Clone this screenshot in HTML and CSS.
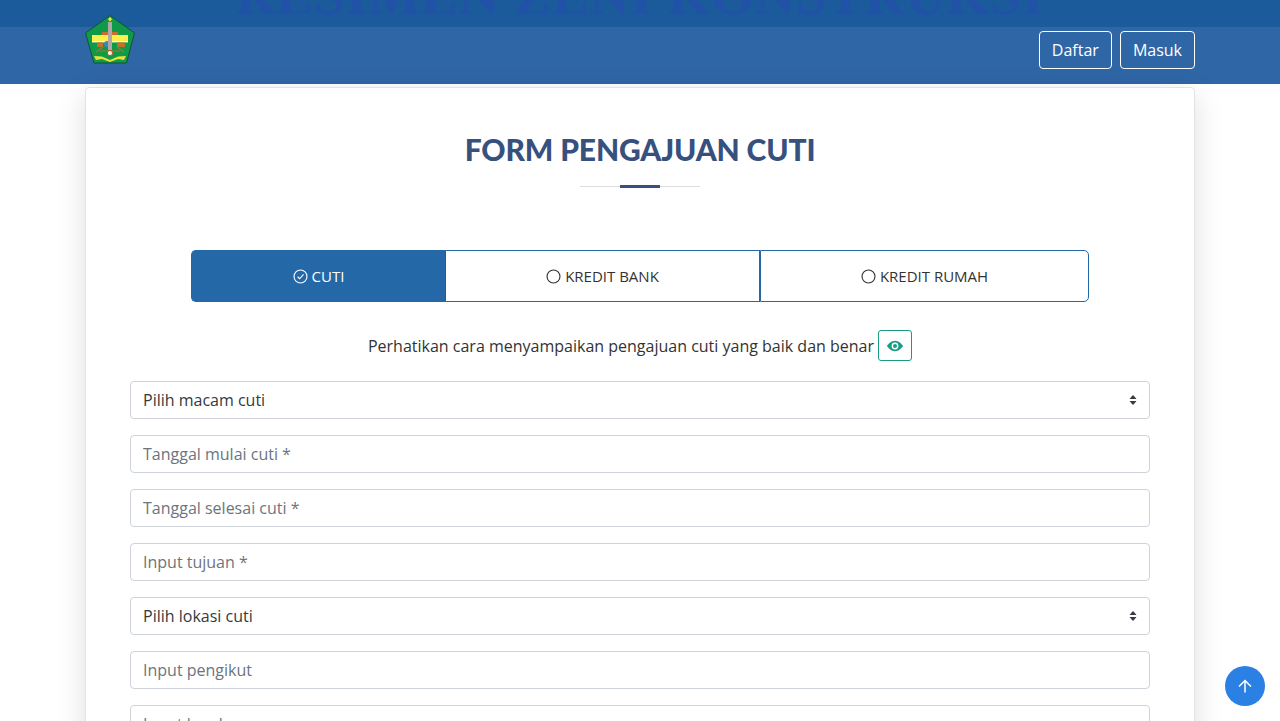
FILE: index.html
```html
<!DOCTYPE html>
<html lang="en">

<head>
    <meta charset="UTF-8">
    <meta name="viewport" content="width=device-width, initial-scale=1.0">
    <title>Form Pengajuan Cuti</title>
    <link rel="stylesheet" href="styles.css">
</head>

<body>
    <!-- Header -->
    <header class="site-header">
        <div class="top-strip">
            <div class="top-title">RESIMEN ZENI KONSTRUKSI</div>
        </div>
        <div class="nav-bar">
            <svg class="logo" viewBox="0 0 50 50" aria-label="Logo">
                <polygon points="25,0.6 49.5,18 41.5,48 9,48 0.5,18" fill="#0f9a48" stroke="#14513a" stroke-width="1" />
                <rect x="17" y="17" width="16" height="3" fill="#c8702a" />
                <rect x="7" y="20" width="36" height="6" fill="#fdf04a" />
                <rect x="7" y="26" width="36" height="1.4" fill="#ffffff" />
                <rect x="12" y="27.4" width="6" height="4.5" fill="#c8702a" />
                <rect x="32" y="27.4" width="8" height="4.5" fill="#c8702a" />
                <path d="M11 37 L18 32 M39 37 L32 32 M15 36 H35" stroke="#a8772a" stroke-width="1.2" fill="none" />
                <circle cx="22" cy="29" r="3" fill="#3f86b8" />
                <rect x="23" y="7" width="4" height="28" fill="#b3a6a8" />
                <circle cx="25" cy="38" r="2.6" fill="#fff3d6" stroke="#c8502a" />
                <polygon points="25,2 27,4.2 25,6.4 23,4.2" fill="#f5e84a" />
                <path d="M9 41 L17 41.5 L25 45 L33 41.5 L41 41 L39 45 L33 44 L25 47 L17 44 L11 45 Z" fill="#e6e23c" />
            </svg>
            <div class="nav-actions">
                <button class="nav-btn">Daftar</button>
                <button class="nav-btn">Masuk</button>
            </div>
        </div>
    </header>

    <!-- Form Card -->
    <main class="form-card">
        <h1 class="form-title">FORM PENGAJUAN CUTI</h1>
        <div class="title-rule"><span></span></div>

        <div class="tabs">
            <button class="tab tab-active">
                <svg class="tab-icon" viewBox="0 0 16 16">
                    <circle cx="8" cy="8" r="6.9" fill="none" stroke="currentColor" stroke-width="1.2" />
                    <path d="M4.9 8.3 L7.1 10.4 L11.2 5.8" fill="none" stroke="currentColor" stroke-width="1.2" />
                </svg>
                CUTI
            </button>
            <button class="tab tab-mid">
                <svg class="tab-icon" viewBox="0 0 16 16">
                    <circle cx="8" cy="8" r="6.9" fill="none" stroke="currentColor" stroke-width="1.2" />
                </svg>
                KREDIT BANK
            </button>
            <button class="tab tab-last">
                <svg class="tab-icon" viewBox="0 0 16 16">
                    <circle cx="8" cy="8" r="6.9" fill="none" stroke="currentColor" stroke-width="1.2" />
                </svg>
                KREDIT RUMAH
            </button>
        </div>

        <p class="hint">
            Perhatikan cara menyampaikan pengajuan cuti yang baik dan benar
            <button class="eye-btn" aria-label="Lihat">
                <svg viewBox="0 0 16 16" width="16" height="16">
                    <path fill="currentColor" d="M8 2.8C4.4 2.8 1.5 5.6 0 8c1.5 2.4 4.4 5.2 8 5.2s6.5-2.8 8-5.2c-1.5-2.4-4.4-5.2-8-5.2zm0 8.6A3.4 3.4 0 1 1 8 4.6a3.4 3.4 0 0 1 0 6.8z" />
                    <circle cx="8" cy="8" r="2" fill="currentColor" />
                </svg>
            </button>
        </p>

        <form class="fields">
            <select class="field field-select">
                <option>Pilih macam cuti</option>
            </select>
            <input class="field" type="text" placeholder="Tanggal mulai cuti *">
            <input class="field" type="text" placeholder="Tanggal selesai cuti *">
            <input class="field" type="text" placeholder="Input tujuan *">
            <select class="field field-select">
                <option>Pilih lokasi cuti</option>
            </select>
            <input class="field" type="text" placeholder="Input pengikut">
            <input class="field" type="text" placeholder="Input keadaan">
        </form>
    </main>

    <!-- Back to top -->
    <button class="to-top" aria-label="Back to top">
        <svg viewBox="0 0 16 16" width="16" height="16">
            <path d="M8 14.5V2.5 M2 8.5 L8 2.5 L14 8.5" fill="none" stroke="#fff" stroke-width="1.5" />
        </svg>
    </button>
</body>

</html>
```

FILE: styles.css
```css
/* General Reset */
* {
    margin: 0;
    padding: 0;
    box-sizing: border-box;
}

html,
body {
    height: 721px;
    overflow: hidden;
}

body {
    background: #fff;
    color: #333;
    font-family: 'Open Sans', sans-serif;
    font-size: 16px;
}

button,
input,
select {
    font-family: inherit;
}

/* Header */
.site-header {
    height: 84px;
    background: #2f66a6;
}

.top-strip {
    height: 27px;
    background: #1b5a9b;
    overflow: hidden;
}

.top-title {
    margin-top: -31px;
    height: 53px;
    line-height: 53px;
    text-align: center;
    font-family: 'Liberation Serif', serif;
    font-size: 55px;
    font-weight: bold;
    letter-spacing: 1px;
    white-space: nowrap;
    color: #2152a8;
}

.nav-bar {
    height: 57px;
    padding: 4px 85px 0;
    display: flex;
    justify-content: space-between;
    align-items: flex-start;
}

.logo {
    width: 50px;
    height: 50px;
    margin-top: -16px;
    display: block;
}

.nav-actions {
    display: flex;
    gap: 8px;
}

.nav-btn {
    height: 38px;
    padding: 0 12px;
    background: transparent;
    border: 1px solid #fff;
    border-radius: 4px;
    color: #fff;
    font-size: 16px;
    font-weight: 500;
}

/* Card */
.form-card {
    width: 1110px;
    margin: 3px auto 0;
    padding: 43px 44px 40px;
    background: #fff;
    border: 1px solid #e3e3e3;
    border-radius: 4px;
    box-shadow: 0 8px 30px rgba(0, 0, 0, 0.13);
}

.form-title {
    font-family: 'Lato', sans-serif;
    font-size: 30px;
    line-height: 36px;
    font-weight: 900;
    letter-spacing: -0.15px;
    text-align: center;
    color: #37517e;
}

.title-rule {
    position: relative;
    width: 120px;
    height: 1px;
    margin: 19px auto 0;
    background: #ddd;
}

.title-rule span {
    position: absolute;
    left: 40px;
    top: -1px;
    width: 40px;
    height: 3px;
    background: #37517e;
}

/* Tabs */
.tabs {
    display: flex;
    width: 898px;
    height: 52px;
    margin: 63px auto 0;
}

.tab {
    display: flex;
    align-items: center;
    justify-content: center;
    gap: 4px;
    height: 52px;
    background: #fff;
    border: 1px solid #2568a7;
    color: #333;
    font-size: 15px;
}

.tab-active {
    width: 255px;
    background: #2568a7;
    border-right-color: #1f5c99;
    color: #fff;
    border-radius: 5px 0 0 5px;
}

.tab-mid {
    width: 314px;
    border-left: 0;
}

.tab-last {
    width: 329px;
    border-radius: 0 5px 5px 0;
}

.tab-icon {
    width: 15px;
    height: 15px;
}

.hint {
    display: flex;
    align-items: center;
    justify-content: center;
    gap: 4px;
    height: 31px;
    margin-top: 28px;
    font-size: 16px;
}

.eye-btn {
    display: flex;
    align-items: center;
    justify-content: center;
    width: 34px;
    height: 31px;
    background: #fff;
    border: 1px solid #1a9c84;
    border-radius: 3px;
    color: #1a9c84;
}

/* Fields */
.fields {
    display: flex;
    flex-direction: column;
    gap: 16px;
    margin-top: 20px;
}

.field {
    display: block;
    width: 100%;
    height: 38px;
    padding: 0 12px;
    background: #fff;
    border: 1px solid #ced4da;
    border-radius: 4px;
    color: #343a40;
    font-size: 16px;
}

.field::placeholder {
    color: #6c757d;
}

.field-select {
    appearance: none;
    background-repeat: no-repeat;
    background-position: right 12px center;
    background-size: 8px 10px;
    background-image: url("data:image/svg+xml,%3Csvg xmlns='http://www.w3.org/2000/svg' viewBox='0 0 8 10'%3E%3Cpath fill='%23343a40' d='M4 0 L7.5 4 H0.5 Z M4 10 L0.5 6 H7.5 Z'/%3E%3C/svg%3E");
}

/* Back to top */
.to-top {
    position: fixed;
    right: 15px;
    bottom: 15px;
    width: 40px;
    height: 40px;
    display: flex;
    align-items: center;
    justify-content: center;
    background: #2b80e3;
    border: 0;
    border-radius: 50%;
}
```
